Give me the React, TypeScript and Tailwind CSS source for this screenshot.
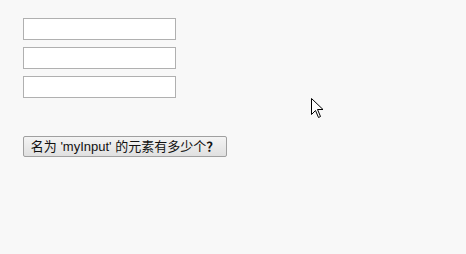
import React from "react";

export default function App() {
  return (
    <div className="relative w-[466px] h-[254px] bg-[#f8f8f8] overflow-hidden" style={{ fontFamily: '"Liberation Sans", "Noto Sans CJK SC", sans-serif' }}>
      <div className="flex flex-col items-start pl-[23px] pt-[18px]">
        <div className="flex flex-col gap-[7px]">
          <input className="w-[153px] h-[22px] bg-white border border-[#b0b0b0] outline-none" />
          <input className="w-[153px] h-[22px] bg-white border border-[#b0b0b0] outline-none" />
          <input className="w-[153px] h-[22px] bg-white border border-[#b0b0b0] outline-none" />
        </div>
        <button className="mt-[38px] w-[204px] h-[21px] flex items-center justify-center rounded-[2px] border border-[#a0a0a0] bg-gradient-to-b from-[#f4f4f4] to-[#e0e0e0] text-[13px] leading-none text-[#111]">
          名为 'myInput' 的元素有多少个<span className="font-bold">？</span>
        </button>
      </div>
      <svg className="absolute left-[311px] top-[98px]" width="14" height="21" viewBox="0 0 14 21">
        <path d="M0.5 0.5 L0.5 16.5 L4.5 12.5 L7.5 19.5 L9.5 18.5 L6.5 11.5 L12 11.5 Z" fill="white" stroke="black" strokeWidth="1" strokeLinejoin="miter" />
      </svg>
    </div>
  );
}
